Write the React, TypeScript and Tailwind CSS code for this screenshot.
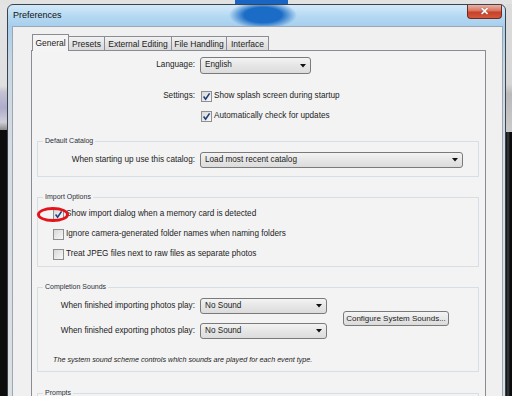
import React from "react";

const Check = ({ checked }: { checked?: boolean }) => (
  <div className="w-[11px] h-[11px] shrink-0 border border-[#8e8f8f] bg-[linear-gradient(135deg,#d9d9d9,#f7f7f7)] flex items-center justify-center">
    {checked && (
      <svg width="9" height="9" viewBox="0 0 9 9">
        <path d="M1.6 4.6 L3.6 7.2 L7.6 1.4" fill="none" stroke="#1f3f7a" strokeWidth="1.6" />
      </svg>
    )}
  </div>
);

const Select = ({ value, className }: { value: string; className: string }) => (
  <div
    className={
      "h-[16px] shrink-0 rounded-[3px] border border-[#7a7a7a] bg-[linear-gradient(#f3f3f3,#e6e6e6_50%,#dcdcdc)] flex items-center pl-[4px] pr-[4px] text-[8.2px] " +
      className
    }
  >
    <span>{value}</span>
    <svg className="ml-auto" width="6" height="4" viewBox="0 0 6 4">
      <path d="M0 0 H6 L3 3.5 Z" fill="#111" />
    </svg>
  </div>
);

const Group = ({ title, className, children }: { title: string; className: string; children: React.ReactNode }) => (
  <fieldset className={"ml-[5px] w-[442px] border border-[#d5dfe5] " + className}>
    <legend className="ml-[5px] px-[2px] text-[7px] leading-[8px] text-[#2b2f3a]">{title}</legend>
    {children}
  </fieldset>
);

const tabs = [
  { name: "General", w: "w-[37px]" },
  { name: "Presets", w: "w-[37px]" },
  { name: "External Editing", w: "w-[68px]" },
  { name: "File Handling", w: "w-[56px]" },
  { name: "Interface", w: "w-[43px]" },
];

export default function App() {
  return (
    <div className="w-[512px] h-[396px] overflow-hidden flex flex-col font-['Liberation_Sans',Arial,sans-serif] text-[#1c1c1c] bg-[#e2e2e2]">
      {/* desktop strip above the window */}
      <div className="h-[4px] shrink-0 flex">
        <div className="ml-[235px] w-[53px] h-full bg-[#1a64c2]" />
      </div>
      <div className="flex flex-1">
        <div className="w-[7px] shrink-0 bg-[#0d0d0d]">
          <div className="h-[126px] bg-[linear-gradient(#e4e4e4,#e0e0e0_82px,#c4c2d2_88px,#aeaccb_104px,#cfcfd8_118px,#8a8a8a_126px)]" />
        </div>
        {/* window */}
        <div className="w-[499px] h-[430px] shrink-0 rounded-t-[6px] border border-[#3d434b] pl-[4px] pr-[2px] flex flex-col bg-[radial-gradient(ellipse_34px_14px_at_255px_10px,#1b6cc6_55%,rgba(27,108,198,0)_100%),linear-gradient(#d3e9f8,#b3d8f2_12px,#a7cfed_21px,#c9d7e3_60px,#d8dde2_160px,#dcdfe2)]">
          <div className="h-[21px] flex items-start shrink-0">
            <span className="ml-[1px] mt-[5px] text-[9px] leading-[10px] text-[#111]">Preferences</span>
            <div className="ml-auto mr-[1px] w-[35px] h-[14px] rounded-b-[4px] border border-t-0 border-[#6e2a20] bg-[linear-gradient(#eab3a6,#d9735d_45%,#c7402a_55%,#d4583c)] flex items-center justify-center">
              <span className="text-[11px] leading-[11px] font-bold text-white [text-shadow:0_0_1px_#5a1a10]">✕</span>
            </div>
          </div>
          {/* client */}
          <div className="flex-1 bg-[#f0f0f0] border border-b-0 border-[#9aa7b4] pt-[7px] pl-[18px]">
            <div className="flex items-end ml-[1px]">
              {tabs.map((t, i) =>
                i === 0 ? (
                  <div
                    key={t.name}
                    className={"relative z-10 h-[17px] -mb-[1px] border border-b-0 border-[#898c95] bg-[#f4f4f4] flex items-center justify-center pt-[1px] text-[8.5px] " + t.w}
                  >
                    {t.name}
                  </div>
                ) : (
                  <div
                    key={t.name}
                    className={"h-[14px] -ml-[1px] border border-b-0 border-[#898c95] bg-[linear-gradient(#f2f2f2,#e4e4e4_50%,#d9d9d9)] flex items-center justify-center pt-[1px] text-[8.5px] " + t.w}
                  >
                    {t.name}
                  </div>
                )
              )}
            </div>
            {/* panel */}
            <div className="w-[455px] h-[400px] border border-[#898c95] bg-[#f3f3f3]">
              <div className="mt-[6px] h-[17px] flex items-center text-[8.2px]">
                <span className="w-[163px] text-right">Language:</span>
                <Select value="English" className="ml-[5px] w-[111px] h-[17px]" />
              </div>
              <div className="mt-[12px] h-[20px] flex items-center text-[8.2px]">
                <span className="w-[163px] text-right">Settings:</span>
                <div className="ml-[6px]"><Check checked /></div>
                <span className="ml-[2px]">Show splash screen during startup</span>
              </div>
              <div className="h-[20px] flex items-center text-[8.2px]">
                <div className="ml-[169px]"><Check checked /></div>
                <span className="ml-[2px]">Automatically check for updates</span>
              </div>

              <Group title="Default Catalog" className="mt-[11px] pb-[8px]">
                <div className="mt-[7px] h-[16px] flex items-center text-[8.2px]">
                  <span className="w-[157px] text-right">When starting up use this catalog:</span>
                  <Select value="Load most recent catalog" className="ml-[5px] w-[263px]" />
                </div>
              </Group>

              <Group title="Import Options" className="mt-[16px] pb-[2px]">
                <div className="mt-[3px] relative h-[20px] flex items-center pl-[15px] text-[8.2px]">
                  <Check checked />
                  <span className="ml-[2px]">Show import dialog when a memory card is detected</span>
                  <div className="absolute left-[-1px] top-[3px] w-[32px] h-[15px] rounded-[50%] border-[3px] border-[#e3121b]" />
                </div>
                <div className="h-[20px] flex items-center pl-[15px] text-[8.2px]">
                  <Check />
                  <span className="ml-[2px]">Ignore camera-generated folder names when naming folders</span>
                </div>
                <div className="h-[20px] flex items-center pl-[15px] text-[8.2px]">
                  <Check />
                  <span className="ml-[2px]">Treat JPEG files next to raw files as separate photos</span>
                </div>
              </Group>

              <Group title="Completion Sounds" className="mt-[16px] pb-[6px]">
                <div className="mt-[7px] flex items-center text-[8.2px]">
                  <div className="flex flex-col gap-[9px]">
                    <div className="h-[16px] flex items-center">
                      <span className="w-[157px] text-right">When finished importing photos play:</span>
                      <Select value="No Sound" className="ml-[5px] w-[127px]" />
                    </div>
                    <div className="h-[16px] flex items-center">
                      <span className="w-[157px] text-right">When finished exporting photos play:</span>
                      <Select value="No Sound" className="ml-[5px] w-[127px]" />
                    </div>
                  </div>
                  <div className="ml-[16px] w-[106px] h-[15px] rounded-[3px] border border-[#7a7a7a] bg-[linear-gradient(#f4f4f4,#e8e8e8_50%,#dadada)] flex items-center justify-center text-[8px]">
                    Configure System Sounds...
                  </div>
                </div>
                <div className="mt-[16px] h-[10px] leading-[10px] pl-[15px] text-[7.2px] italic">
                  The system sound scheme controls which sounds are played for each event type.
                </div>
              </Group>

              <Group title="Prompts" className="mt-[17px] h-[40px]">
                <div />
              </Group>
            </div>
          </div>
        </div>
        <div className="flex-1 bg-[linear-gradient(90deg,#0b0b0b,#3a3f46_2px,#0b0b0b_4px)]">
          <div className="h-[128px] bg-[linear-gradient(#dcdcdc_0,#d6d6d6_80px,#b9b9b9_90px,#c9c9c9_124px)]" />
        </div>
      </div>
    </div>
  );
}
